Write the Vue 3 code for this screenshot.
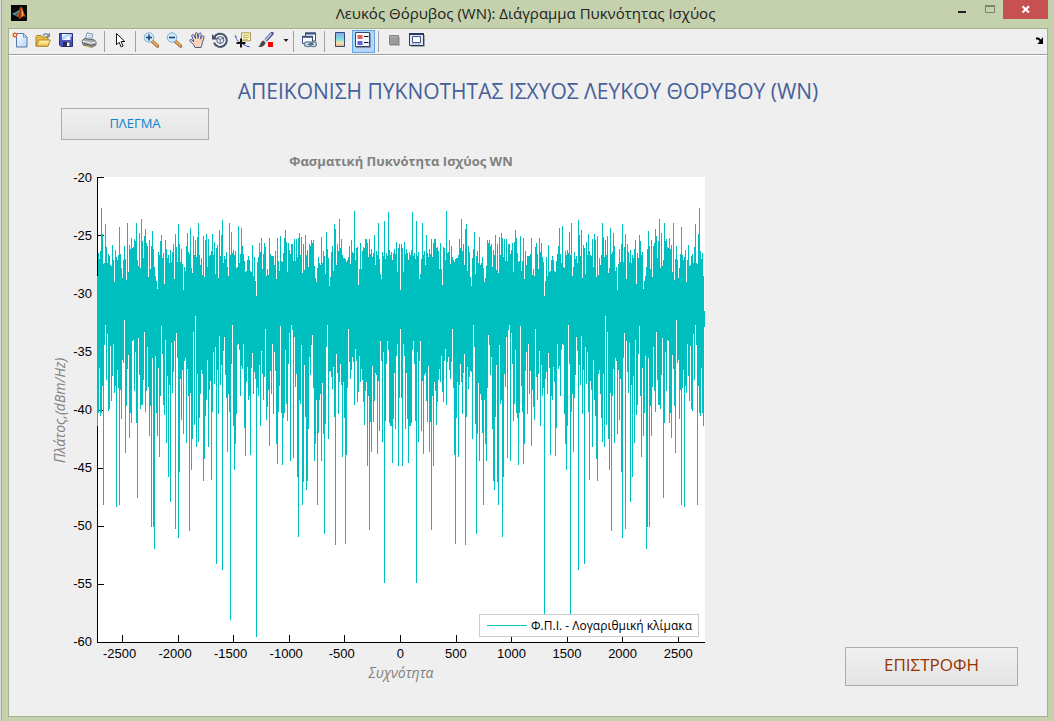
<script setup>
import { computed } from 'vue'

const yTicks = [-20, -25, -30, -35, -40, -45, -50, -55, -60]
const xTicks = [-2500, -2000, -1500, -1000, -500, 0, 500, 1000, 1500, 2000, 2500]

// Spectrum envelope of the negative frequencies, one value per column, three units per pixel.
const peaks = `408 338 357 333 204 282 372 369 252 321 369 342 348 375 378 315 360 426 330 351 360 345 261 342
384 414 360 318 357 420 249 396 315 327 294 324 321 297 303 249 360 378 279 384 237 303 354 288 267 309 318 411
300 387 318 273 327 381 408 423 447 336 345 303 285 354 339 432 300 327 354 345 369 330 366 336 312 417 282 321
366 252 312 366 327 372 450 381 393 318 279 336 342 264 384 399 288 345 300 351 291 249 345 375 354 405 288 411
300 282 381 297 348 345 333 282 345 306 402 324 315 414 270 348 285 240 369 348 357 336 381 408 249 345 276 339
330 345 333 384 381 258 369 342 264 318 342 363 396 393 360 348 360 393 396 315 408 351 423 468 366 351 309 336
294 387 342 309 321 408 387 405 294 342 348 348 348 375 333 417 294 363 393 288 363 366 339 294 270 306 396 309
330 342 312 312 363 297 363 297 351 294 279 345 291 399 312 390 285 345 330 381 312 318 300 309 300 378 414 426
384 351 369 375 291 369 333 348 402 276 327 354 438 411 336 318 393 252 267 375 312 333 237 324 297 345 354 354
357 366 360 351 318 372 300 336 339 213 360 324 321 435 387 309 387 333 321 324 297 297 309 351 297 342 327 351
339 285 375 333 345 249 357 402 417 336 348 243 357 339 348 216 330 345 336 360 339 327 342 306 396 324 312 450`
  .split(/\s+/).map(Number)

// Lower edge where it differs from the common floor, as position:level.
const troughs = `172:858 178:684 187:738 193:615 196:555 199:720 202:582 211:618 217:708 220:612 223:759 226:738
232:690 235:744 241:750 247:660 250:669 253:540 262:687 265:645 277:603 280:600 283:753 286:636 295:594 298:705
310:720 313:576 319:753 322:621 325:741 337:654 346:648 355:684 361:768 364:558 367:642 376:600 382:708 388:735
394:609 397:759 400:696 403:603 409:579 412:654 421:717 427:690 433:663 436:654 442:687 445:768 451:759 460:576
466:528 472:702 481:762 484:690 487:702 502:660 508:750 511:723 520:636 523:732 526:621 532:690 538:588 541:735
544:675 550:633 553:591 556:705 559:774 565:762 574:672 577:555 592:615 595:612 598:630 601:768 604:678 607:687
610:612 619:726 622:681 628:768 634:684 637:639 640:762 643:696 646:717 652:744 655:768 658:675 664:633 667:702
673:711 676:567 685:750 691:693 694:762 697:612 703:636 706:693 718:738 721:558 736:630 745:672 748:579 754:555
757:570 763:591 766:741 769:702 784:615 793:675 808:651 811:705 814:615 817:585 820:744 841:762 847:729 859:621
862:555 868:696 871:693 874:711 877:747 880:681 889:642 892:699 898:726 901:672 904:735 910:726 922:744 925:567
928:666 931:717 934:690 937:651 940:666 946:627 949:663 955:756 958:648 961:726 964:687 967:720 973:774 976:753
979:726 985:768 997:678 1006:699 1009:705 1015:723 1021:603 1024:663 1030:636 1039:672 1042:603 1045:630 1063:699
1069:648 1072:612 1078:774 1081:567
175:818 181:827 184:818 190:1095 205:812 208:806 214:783 229:1101 238:1095 244:837 256:938 259:797 268:893
271:818 274:848 289:848 292:1073 301:806 304:794 307:794 316:815 328:887 331:797 334:1160 340:1160 343:1226
349:818 352:887 358:950 370:794 373:824 379:908 385:1010 391:1085 406:1166 415:1193 418:995 424:839 430:881
439:908 448:1172 454:989 457:896 463:854 469:920 475:905 478:833 490:1022 493:956 496:827 505:920 514:1019
517:815 529:1271 535:821 547:1289 562:935 568:815 571:1439 580:857 583:989 586:911 589:821 613:863 616:947
631:944 649:1490 661:857 679:839 682:800 688:917 700:821 709:911 712:971 715:815 724:818 727:974 730:833 733:818
739:791 742:842 751:962 760:953 772:1010 775:1190 781:791 787:1094 790:1025 796:830 799:1049 802:1022 805:866
823:962 826:911 832:1094 835:878 844:962 850:881 853:1181 856:851 865:896 883:830 886:1214 895:821 907:950
913:833 916:1211 919:944 943:794 952:785 970:785 973:854 982:977 988:1169 991:845 994:935 1000:845 1003:782
1012:941 1018:872 1027:905 1033:1328 1036:842 1048:848 1051:857 1054:857 1057:968 1060:836 1066:866 1075:977`

const spectrum = computed(() => {
  const floor = peaks.map(() => 780)
  for (const pair of troughs.split(/\s+/)) {
    const [pos, level] = pair.split(':').map(Number)
    floor[(pos - 172) / 3] = level
  }
  const last = peaks.length - 1
  let d = ''
  peaks.forEach((top, i) => {
    d += `M${172.5 + 3 * i} ${top}V${floor[i]}`
    if (i < last) d += `M${172.5 + 3 * (2 * last - i)} ${top}V${floor[i]}`
  })
  return d + `M${172.5 + 3 * (2 * last + 1)} 513V561`
})

const axes = computed(() => {
  let d = 'M172.5 111V1506M171 1507.5H1995'
  yTicks.forEach((_, i) => { d += `M172.5 ${112.5 + Math.round(i * 58.125) * 3}h19` })
  xTicks.forEach((v) => { d += `M${1081.5 + Math.round(v / 9) * 3} 1506v-21` })
  return d
})
</script>

<template>
  <div class="window">
    <header class="titlebar">
      <svg class="logo" viewBox="0 0 16 16" aria-hidden="true">
        <rect width="16" height="16" fill="#080808" />
        <path d="M1 8.8 5 7.1 7.6 5.2 8.4 6.3 5.2 11 3.5 10.3z" fill="#4c9fae" />
        <path d="M3.5 10.3 6 8l2.4-1.7L6 12z" fill="#27536b" />
        <path d="M5.3 11.1C7.5 9 8.5 3 10 1.6c1.8 1.3 2.6 7.2 5 10.6-2.1-1.4-3.2-1.2-6.5 2-.8-1.5-1.6-2.6-3.2-3.1z" fill="#d95e1e" />
        <path d="M10 1.6c-.7 3.6-1.4 7.5-3 10.1l1.5 2.5c1.5-2.7 2.5-7.4 1.5-12.6z" fill="#8d2c12" />
        <path d="M10 1.8c.8 2.4 1.1 6.5.8 9.7l1.1-.7c.4-3.6-.8-7-1.9-9z" fill="#ffbb58" />
      </svg>
      <div class="caption">Λευκός Θόρυβος (WN): Διάγραμμα Πυκνότητας Ισχύος</div>
      <div class="controls">
        <button class="ctl" aria-label="Minimize"><svg viewBox="0 0 27 19"><path d="M9 12h8" stroke="#222" stroke-width="2" /></svg></button>
        <button class="ctl" aria-label="Maximize"><svg viewBox="0 0 27 19"><path d="M9.5 6v6.5h9V6" fill="none" stroke="#7b8569" /><path d="M9 6h10" stroke="#7b8569" stroke-width="2" /></svg></button>
        <button class="ctl close" aria-label="Close"><svg viewBox="0 0 45 19"><path d="m19.5 6.2 6.5 6.3m0-6.3-6.5 6.3" stroke="#fff" stroke-width="2" /></svg></button>
      </div>
    </header>

    <main class="frame">
      <nav class="toolbar" aria-label="Figure">
        <svg width="0" height="0" class="defs" aria-hidden="true">
          <defs>
            <linearGradient id="page" x2="1" y2="1"><stop stop-color="#fff" /><stop offset="1" stop-color="#b5d2f3" /></linearGradient>
            <linearGradient id="folder" y2="1" x2="0"><stop stop-color="#fffbb8" /><stop offset="1" stop-color="#f2bf45" /></linearGradient>
            <linearGradient id="spectrumBar" y2="1" x2="0"><stop stop-color="#8aa8ee" /><stop offset=".5" stop-color="#86dfd8" /><stop offset=".75" stop-color="#f2e8a0" /><stop offset="1" stop-color="#ef9e8c" /></linearGradient>
          </defs>
        </svg>
        <button class="tool" aria-label="New figure"><svg viewBox="0 0 16 16">
          <path d="M4.5 1.5h7l3.5 3.5v10H4.5z" fill="url(#page)" stroke="#5878aa" /><path d="M11.5 1.5V5H15z" fill="#e4efff" stroke="#5878aa" stroke-width=".8" />
          <path d="M3 0v6M0 3h6M.8.8l4.4 4.4m0-4.4L.8 5.2" stroke="#e8804c" stroke-width="1" /><circle cx="3" cy="3" r="1.7" fill="#fff2b0" stroke="#d4532c" />
        </svg></button>
        <button class="tool" aria-label="Open"><svg viewBox="0 0 16 16">
          <path d="M1 14V4.5l1-1h4l1.5 1.5H13V14z" fill="#e7bb42" stroke="#a27a20" stroke-width=".9" /><path d="M1.2 14.2 3.8 8H15.3L13 14.2z" fill="url(#folder)" stroke="#a97f21" stroke-width=".9" />
          <path d="M8 3.5c1.5-2.2 4-2.4 5.5-.2m.8-2v3h-3" fill="none" stroke="#536c91" stroke-width="1.1" />
        </svg></button>
        <button class="tool" aria-label="Save"><svg viewBox="0 0 16 16">
          <path d="M1.5 1.5h13v13H3l-1.5-1.5z" fill="#4c56bd" stroke="#29327d" /><path d="M4 2h8.5v6H4z" fill="#eef5ff" /><path d="M4 5 9 2h3.5v1L5 8H4z" fill="#b9d3f5" />
          <path d="M5 10h7.5v4.5H5z" fill="#252d55" /><path d="M9 10.5h2.5v3.5H9z" fill="#fff" /><path d="M13 2.5h1v2h-1z" fill="#c9d4ff" />
        </svg></button>
        <button class="tool" aria-label="Print"><svg viewBox="0 0 16 16">
          <path d="M4.5 7 6 .8l5.8 1.4-1.2 5z" fill="#f0f6ff" stroke="#7286a5" stroke-width=".9" /><path d="m7 3 3.5.8M6.7 5l3.5.7" stroke="#91acd0" stroke-width=".7" />
          <path d="M1 8.5 4 6.5l9.5 1.5 1.5 2v3L11 15.3 2 13z" fill="#a9aaae" stroke="#58595e" stroke-width=".9" />
          <path d="m1.4 9 9 2.2L14.7 10" fill="none" stroke="#f8f8f8" /><path d="m3 11.5 7.5 2 3-1.2" fill="none" stroke="#4e4f54" /><path d="m5 14.2 4.6 1.2 1.5-1" fill="none" stroke="#dfc05a" />
        </svg></button>
        <span class="sep" />
        <button class="tool" aria-label="Edit plot"><svg viewBox="0 0 16 16"><path d="M4.5 1.5v11.3l2.6-2.6 2 4.7 2-.9-2-4.5h3.7z" fill="#fff" stroke="#111" /></svg></button>
        <span class="sep" />
        <button class="tool" aria-label="Zoom in"><svg viewBox="0 0 16 16">
          <path d="m9 9 5.5 5" stroke="#9a6938" stroke-width="3.4" stroke-linecap="round" /><path d="m9 8.8 5.2 4.7" stroke="#f1ad52" stroke-width="1.8" stroke-linecap="round" />
          <circle cx="6" cy="5.5" r="4.8" fill="#c9ecfc" stroke="#8ca9cc" /><path d="M3 5.5h6m-3-3v6" stroke="#243f78" stroke-width="1.6" />
        </svg></button>
        <button class="tool" aria-label="Zoom out"><svg viewBox="0 0 16 16">
          <path d="m9 9 5.5 5" stroke="#9a6938" stroke-width="3.4" stroke-linecap="round" /><path d="m9 8.8 5.2 4.7" stroke="#f1ad52" stroke-width="1.8" stroke-linecap="round" />
          <circle cx="6" cy="5.5" r="4.8" fill="#c9ecfc" stroke="#8ca9cc" /><path d="M3 5.5h6" stroke="#243f78" stroke-width="1.6" />
        </svg></button>
        <button class="tool" aria-label="Pan"><svg viewBox="0 0 16 16">
          <path d="M6 15.5 4.5 12.5 1 9.3c-1-1.8 1-2.4 2-1.2l2 1.6L2.8 4c-.4-1.7 1.6-2.2 2.2-.6l1.6 3.3L6.2 2c0-1.8 2.1-1.9 2.3-.2L9 6.3l.9-4.5c.5-1.6 2.5-1 2.3.6l-.7 4.7 1.5-2.7c.9-1.3 2.6-.4 2 1.1l-1.6 5-.6 3-.8 2z" fill="#fbd3b3" stroke="#3f5ca0" />
        </svg></button>
        <button class="tool" aria-label="Rotate 3D"><svg viewBox="0 0 16 16">
          <path d="M2.2 5.5A6.6 6.6 0 1 1 2 10.6" fill="none" stroke="#44516d" stroke-width="2" /><path d="M0 2v5.5h5.8z" fill="#44516d" />
          <path d="m8.3 4.5 3.3 1.3v4l-3.3 1.9L5 10V6z" fill="#eef3fa" stroke="#53617d" /><path d="m5 6 3.3 1.5 3.3-1.7M8.3 7.5v4" fill="none" stroke="#53617d" stroke-width=".9" />
        </svg></button>
        <button class="tool" aria-label="Data cursor"><svg viewBox="0 0 16 16">
          <path d="M6.5.8h9v8h-9z" fill="#fbf6bd" stroke="#ad9b50" /><path d="M8 3.3h6M8 5.3h6M8 7.3h5" stroke="#b4a45b" stroke-width=".8" />
          <path d="M.5 3.5c.5 3.5 2 6 5.5 7.5 3 1.5 5 3.5 9.5 4" fill="none" stroke="#1414e0" stroke-dasharray="3 1" /><path d="M1.5 11h9M6 6.5v9" stroke="#111" stroke-width="2" />
        </svg></button>
        <button class="tool" aria-label="Brush"><svg viewBox="0 0 16 16">
          <path d="m7 9 7-7.5" stroke="#4d568b" stroke-width="3.4" stroke-linecap="round" /><path d="m7.5 8 6-6.5" stroke="#c9d3f2" stroke-width="1.3" /><path d="m5.8 7.5 2.8 2.7" stroke="#d1d1d7" stroke-width="2" />
          <path d="M0 15c2.3-.5 2-5 4.9-6.3l2.4 2.2C7 14 3 15.4 0 15z" fill="#454545" /><path d="M10 10h5v5h-5z" fill="#f00" />
        </svg></button>
        <button class="tool caret" aria-label="Brush colours"><svg viewBox="0 0 16 16"><path d="M5.5 7h5l-2.5 3z" fill="#222" /></svg></button>
        <span class="sep" />
        <button class="tool" aria-label="Link plot"><svg viewBox="0 0 16 16">
          <path d="M4.5 1h10v8h-10z" fill="#f6faff" stroke="#39517d" /><path d="M4 1.5h11" stroke="#39517d" stroke-width="2" /><path d="M1.5 4.5h10v7h-10z" fill="#f6faff" stroke="#39517d" /><path d="M1 4.8h11" stroke="#39517d" stroke-width="2" />
          <rect x="3.5" y="10" width="6.5" height="4.6" rx="2.3" fill="#dce8ef" stroke="#70899d" stroke-width="1.5" /><rect x="9" y="10" width="6.3" height="4.6" rx="2.3" fill="none" stroke="#70899d" stroke-width="1.5" /><path d="M6.5 12.3H13" stroke="#42586c" />
        </svg></button>
        <span class="sep" />
        <button class="tool" aria-label="Insert colorbar"><svg viewBox="0 0 16 16"><path d="M3.5.5h9v14h-9z" fill="url(#spectrumBar)" stroke="#344a78" /></svg></button>
        <button class="tool active" aria-label="Insert legend" aria-pressed="true"><svg viewBox="0 0 16 16">
          <path d="M.5.5h14v14H.5z" fill="#f5f9ff" stroke="#34496f" /><path d="M15.5 1v14.5H1" fill="none" stroke="#8295b1" /><path d="M2.5 3h5v4h-5z" fill="#e15f5d" /><path d="M2.5 9h5v4h-5z" fill="#6164d3" /><path d="M9 4.5h4.5M9 10.5h4.5" stroke="#111" />
        </svg></button>
        <span class="sep" />
        <button class="tool" aria-label="Hide plot tools"><svg viewBox="0 0 16 16"><path d="M4 5h10v9H4z" fill="#bdbdbd" /><path d="M3.5 3.5h9v9h-9z" fill="#9b9b9b" stroke="#858585" /><path d="M4 5h8" stroke="#b6b6b6" /></svg></button>
        <button class="tool" aria-label="Show plot tools"><svg viewBox="0 0 16 16"><path d="M.5 1.5h14v12H.5z" fill="#e1e8f4" stroke="#263b68" /><path d="M0 2h15" stroke="#263b68" stroke-width="2" /><path d="M3.5 4.5h8v6h-8z" fill="#fff" stroke="#435b8c" /><path d="M3 12h9" stroke="#7d92bb" stroke-dasharray="2 1" /><path d="M15.5 3v11.5H2" fill="none" stroke="#a8a8a8" /></svg></button>
        <button class="tool dock" aria-label="Dock figure"><svg viewBox="0 0 16 16"><path d="M5 6.5h2.2l2.6 2.3" fill="none" stroke="#000" stroke-width="2" /><path d="M12 5v7H6.5z" fill="#000" /></svg></button>
      </nav>

      <section class="panel">
        <h1>ΑΠΕΙΚΟΝΙΣΗ ΠΥΚΝΟΤΗΤΑΣ ΙΣΧΥΟΣ ΛΕΥΚΟΥ ΘΟΡΥΒΟΥ (WN)</h1>
        <button class="push grid-toggle">ΠΛΕΓΜΑ</button>
        <div class="body">
          <figure class="chart">
            <figcaption>Φασματική Πυκνότητα Ισχύος WN</figcaption>
            <div class="y-side">
              <div class="y-label">Πλάτος,(dBm/Hz)</div>
              <div class="y-ticks"><span v-for="t in yTicks" :key="t">{{ t }}</span></div>
            </div>
            <div class="plot">
              <svg viewBox="171 111 1824 1398" shape-rendering="crispEdges" role="img" aria-label="Φασματική Πυκνότητα Ισχύος WN">
                <rect x="171" y="111" width="1824" height="1395" fill="#fff" />
                <path :d="axes" stroke="#000" stroke-width="3" />
                <path :d="spectrum" stroke="#00bfbf" stroke-width="3" />
              </svg>
              <div class="legend"><span class="swatch" />Φ.Π.Ι. - Λογαριθμική κλίμακα</div>
            </div>
            <div class="x-ticks"><span v-for="t in xTicks" :key="t" :class="{ negative: t < 0 }">{{ t }}</span></div>
            <div class="x-label">Συχνότητα</div>
          </figure>
          <aside><button class="push back">ΕΠΙΣΤΡΟΦΗ</button></aside>
        </div>
      </section>
    </main>
  </div>
</template>

<style>
body { margin: 0; background: #c4d1ac; }
</style>

<style scoped>
* { box-sizing: border-box; }
button { margin: 0; padding: 0; border: 0; background: none; font: inherit; color: inherit; }
svg { display: block; }
.window {
  display: flex; flex-direction: column; min-height: 100vh; padding: 0 6px 4px 7px;
  border-left: 1px solid #dcdcdc; box-shadow: inset 1px 0 #a0a89a; background: #c4d1ac;
  font-family: "Open Sans", "Noto Sans", sans-serif;
}
.titlebar { display: grid; grid-template-columns: 1fr auto 1fr; height: 28px; margin-left: -5px; }
.logo { width: 16px; height: 16px; margin: 5px 0 0 8px; }
.caption { font-size: 15px; line-height: 26px; color: #222; white-space: nowrap; }
.controls { display: flex; justify-content: flex-end; align-items: flex-start; }
.ctl svg { width: 27px; height: 19px; }
.close { background: #c75050; }
.close svg { width: 45px; }
.frame { flex: 1; display: flex; flex-direction: column; border: 1px solid #a5b38c; background: #efefef; }
.toolbar { display: flex; align-items: center; height: 27px; border-bottom: 1px solid #fff; box-shadow: inset 0 -1px #a0a0a0; padding-bottom: 2px; }
.defs { position: absolute; }
.tool { display: grid; place-items: center; width: 23px; height: 23px; flex: none; padding: 0 2px 2px 0; }
.tool svg { width: 16px; height: 16px; }
.caret { width: 12px; }
.active { background: #b5d6f6; border: 1px solid #5ea3e4; }
.sep { width: 8px; flex: none; height: 21px; background: linear-gradient(#a0a0a0, #a0a0a0) 3px 0 / 1px 100% no-repeat; }
.dock { margin-left: auto; width: 16px; }
.panel { flex: 1; padding-bottom: 30px; }
h1 { margin: 0; padding-top: 20px; font-size: 21px; line-height: 30px; font-weight: 400; text-align: center; color: #46609a; }
.push { display: block; border: 1px solid #adadad; background: linear-gradient(#f0f0f0, #e4e4e4); }
.grid-toggle { width: 148px; height: 32px; margin: 2px 0 0 52px; padding-bottom: 2px; font-size: 13px; color: #0b84cf; }
.body { display: grid; grid-template-columns: minmax(0, 1fr) 342px; margin-top: 11px; }
.chart { display: grid; grid-template-columns: 88px minmax(0, 1fr); margin: 0; }
figcaption { grid-column: 2; height: 26px; font-size: 13px; line-height: 20px; font-weight: 700; text-align: center; color: #808080; }
.y-side { display: flex; justify-content: space-between; align-items: stretch; padding: 0 5px 0 42px; }
.y-label { writing-mode: vertical-rl; transform: rotate(180deg); text-align: center; font-size: 14px; line-height: 18px; font-style: italic; color: #808080; }
.y-ticks { display: flex; flex-direction: column; justify-content: space-between; text-align: right; font: 13px/0 "Liberation Sans", sans-serif; padding: 1px 0; }
.y-ticks span { height: 0; }
.plot { position: relative; }
.plot > svg { width: 100%; height: auto; }
.legend {
  position: absolute; right: 6px; bottom: 6px; display: flex; align-items: center; gap: 4px; height: 23px;
  padding: 0 6px 0 7px; border: 1px solid #ccc; background: #fff; font-size: 12px; white-space: nowrap; color: #000;
}
.swatch { width: 40px; height: 1px; background: #00bfbf; }
.x-ticks { grid-column: 2; display: flex; justify-content: space-between; padding: 0 4.4% 0 4.2%; font: 13px/22px "Liberation Sans", sans-serif; }
.x-ticks span { width: 0; display: flex; justify-content: center; }
.x-ticks .negative { padding-right: 4px; margin: 0 -1px 0 -3px; }
.x-label { grid-column: 2; height: 21px; font-size: 14px; line-height: 15px; font-style: italic; text-align: center; color: #808080; }
aside { display: flex; align-items: flex-end; justify-content: flex-end; padding-right: 29px; }
.back { width: 173px; height: 39px; padding-bottom: 4px; font-size: 17px; color: #993300; }
</style>
